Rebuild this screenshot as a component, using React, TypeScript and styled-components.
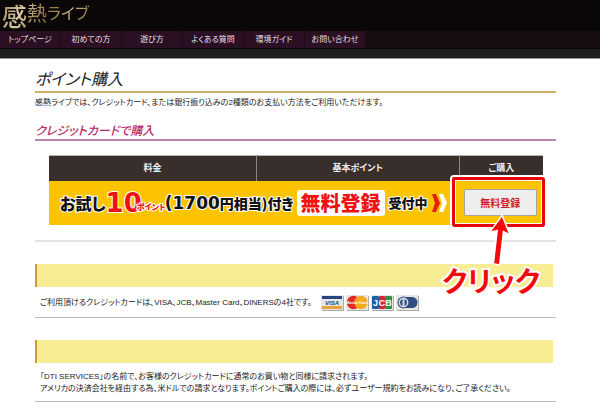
import React from "react";
import styled, { createGlobalStyle } from "styled-components";

const GlobalStyle = createGlobalStyle`
  * { box-sizing: border-box; }
  body {
    margin: 0;
    background: #fff;
    color: #222;
    font-family: "Liberation Sans", "Noto Sans CJK JP", sans-serif;
    font-size: 8px;
    line-height: 12px;
    font-feature-settings: "palt";
  }
`;

const Header = styled.header`
  background: #0b0708;
`;

const Logo = styled.a`
  display: flex;
  align-items: flex-start;
  width: max-content;
  height: 31px;
  padding-left: 2px;
  color: transparent;
  background: linear-gradient(115deg, #8b7a50, #d6c9a0 25%, #8d733c 50%, #c5b385 75%, #806a3c);
  background-clip: text;
  -webkit-background-clip: text;
  text-decoration: none;
  font-family: "Noto Sans CJK JP", sans-serif;
`;

const LogoPart = styled.span<{ $size: number; $top: number; $weight?: number }>`
  font-size: ${(p) => p.$size}px;
  line-height: ${(p) => p.$size}px;
  margin-top: ${(p) => p.$top}px;
  font-weight: ${(p) => p.$weight ?? 400};
  & + &:last-child { margin-left: 2px; }
`;

const Nav = styled.nav`
  display: flex;
  height: 18px;
  background: #160d11;
  border-bottom: 1px solid #090607;
`;

const NavLink = styled.a`
  width: 61px;
  line-height: 17px;
  text-align: center;
  white-space: nowrap;
  color: #e6dfe3;
  background: #2b0f23;
  border-right: 1px solid #1a0a16;
  text-decoration: none;
`;

const Strip = styled.div`
  height: 10px;
  background: #1f1f1f;
  border-bottom: 1px solid #999;
`;

const Main = styled.main`
  padding: 10px 44px 0 35px;
`;

const Title = styled.h1`
  margin: 0;
  height: 24px;
  font-size: 16px;
  line-height: 22px;
  font-weight: 400;
  font-style: italic;
  border-bottom: 2px solid #cdb164;
`;

const Intro = styled.p`
  margin: 4px 0 15px;
`;

const Subtitle = styled.h2`
  margin: 0;
  height: 17px;
  font-size: 12px;
  line-height: 15px;
  font-weight: 500;
  font-style: italic;
  color: #b52a6b;
  border-bottom: 2px solid #bd86ac;
`;

const PlanArea = styled.div`
  padding: 14px 13px 15px 14px;
  border-bottom: 2px solid #e4e4e4;
`;

const PlanTable = styled.table`
  width: 100%;
  table-layout: fixed;
  border-collapse: collapse;
  border-top: 1px solid #bbb3ae;
`;

const Col = styled.col<{ $share: number }>`
  width: ${(p) => p.$share}%;
`;

const HeadCell = styled.th`
  height: 25px;
  padding: 0;
  font-size: 9px;
  font-weight: 700;
  color: #f1ecea;
  background: #382e2b;
  & + & { border-left: 1px solid #91847f; }
`;

const OfferCell = styled.td`
  height: 44px;
  padding: 0;
  background: #fcc400;
`;

const BuyCell = styled(OfferCell)`
  position: relative;
  border-left: 1px solid #e0c56a;
`;

const Offer = styled.div`
  display: flex;
  align-items: center;
  padding-left: 11px;
  height: 44px;
  white-space: nowrap;
  font-family: "DejaVu Sans", "Noto Sans CJK JP", sans-serif;
  font-weight: 700;
  color: #111;
`;

const OfferText = styled.span<{ $size: number; $tone?: string }>`
  font-family: "Noto Sans CJK JP", sans-serif;
  font-weight: 900;
  font-size: ${(p) => p.$size}px;
  line-height: 26px;
  color: ${(p) => p.$tone ?? "#111"};
  -webkit-text-stroke: 2px #fff;
  paint-order: stroke fill;
`;

const Digits = styled.span<{ $size: number; $tone?: string }>`
  font-size: ${(p) => p.$size}px;
  line-height: 26px;
  color: ${(p) => p.$tone ?? "#111"};
  -webkit-text-stroke: 2px #fff;
  paint-order: stroke fill;
`;

const Unit = styled(OfferText)`
  align-self: flex-end;
  margin: 0 -1px 0 -5px;
  padding-bottom: 6px;
  line-height: 24px;
`;

const FreeBadge = styled.span`
  margin: 0 4px 0 3px;
  padding: 0 4px;
  border-radius: 3px;
  background: #fff;
  color: #ee1111;
  font-family: "Noto Sans CJK JP", sans-serif;
  font-weight: 900;
  font-size: 20px;
  line-height: 26px;
`;

const Chevrons = styled.svg`
  width: 17px;
  height: 20px;
  margin-left: 3px;
`;

const BuyButton = styled.button`
  display: block;
  width: calc(100% - 10px);
  height: 27px;
  margin: 0 6px 0 4px;
  padding: 0;
  border: 1px solid #aaa49a;
  border-radius: 2px;
  background: #eee;
  color: #d01c28;
  font: 700 10px/24px "Noto Sans CJK JP", sans-serif;
`;

const Marker = styled.div`
  position: absolute;
  inset: -4px -2px -2px -8px;
  border: 3px solid #e8060d;
  border-radius: 2px;
  outline: 2px solid #fff;
  box-shadow: inset 0 0 0 1px #fff;
  pointer-events: none;
`;

const Callout = styled.div`
  position: absolute;
  top: 34px;
  right: 2px;
  width: 100px;
  display: flex;
  flex-direction: column;
  align-items: center;
  pointer-events: none;
`;

const Arrow = styled.svg`
  width: 24px;
  height: 52px;
  margin-left: 16px;
`;

const CalloutText = styled.span`
  font-family: "Noto Sans CJK JP", sans-serif;
  font-size: 28px;
  line-height: 26px;
  font-weight: 700;
  white-space: nowrap;
  color: #f00a0a;
  -webkit-text-stroke: 4px #fff;
  paint-order: stroke fill;
`;

const Section = styled.section`
  padding-bottom: 6px;
  border-bottom: 1px solid #bbb;
`;

const Bar = styled.div`
  height: 23px;
  margin: 22px 3px 0 0;
  border-left: 2px solid #c9a02c;
  background: #f8ec95;
`;

const Row = styled.div`
  display: flex;
  align-items: center;
  gap: 9px;
  padding: 8px 0 0 5px;
`;

const Note = styled.p`
  margin: 0;
  padding: 8px 0 0 5px;
`;

const Cards = styled.div`
  display: flex;
  gap: 2px;
`;

const CardIcon = styled.svg`
  width: 23px;
  height: 16px;
`;

const nav = ["トップページ", "初めての方", "遊び方", "よくある質問", "環境ガイド", "お問い合わせ"];

const CardBase = () => (
  <>
    <rect x="1" y="1" width="22" height="15" fill="#aaa" />
    <rect width="22" height="15" fill="#e8e6e0" />
  </>
);

const Visa = () => (
  <CardIcon viewBox="0 0 23 16" role="img" aria-label="VISA">
    <CardBase />
    <rect x="1" y="1" width="20" height="3" fill="#27477c" />
    <rect x="1" y="11" width="20" height="3" fill="#e3a33e" />
    <text x="11" y="10" textAnchor="middle" fontSize="6" fontWeight="700" fontStyle="italic" fill="#27477c">VISA</text>
  </CardIcon>
);

const Master = () => (
  <CardIcon viewBox="0 0 23 16" role="img" aria-label="MasterCard">
    <CardBase />
    <circle cx="7.5" cy="7.5" r="6.7" fill="#e52b23" />
    <circle cx="15" cy="7.5" r="6.7" fill="#f5a91d" />
    <text x="11" y="9" textAnchor="middle" fontSize="4" fontWeight="700" fill="#fff">MasterCard</text>
  </CardIcon>
);

const Jcb = () => (
  <CardIcon viewBox="0 0 23 16" role="img" aria-label="JCB">
    <CardBase />
    <rect x="1" y="1" width="7" height="13" rx="1" fill="#245da6" />
    <rect x="8" y="1" width="6" height="13" rx="1" fill="#d82534" />
    <rect x="14" y="1" width="7" height="13" rx="1" fill="#269440" />
    <g fontSize="9" fontWeight="700" fill="#fff" textAnchor="middle">
      <text x="4.5" y="11">J</text>
      <text x="11" y="11">C</text>
      <text x="17.5" y="11">B</text>
    </g>
  </CardIcon>
);

const Diners = () => (
  <CardIcon viewBox="0 0 23 16" role="img" aria-label="DINERS">
    <CardBase />
    <path d="M8 2h8a5.5 5.5 0 0 1 0 11H8z" fill="#304b80" />
    <circle cx="7.5" cy="7.5" r="6" fill="#304b80" />
    <circle cx="7.5" cy="7.5" r="4.9" fill="#d9dde6" />
    <path d="M6.5 4a3.7 3.7 0 0 0 0 7zM8.5 4a3.7 3.7 0 0 1 0 7z" fill="#304b80" />
  </CardIcon>
);

export default function App() {
  return (
    <>
      <GlobalStyle />
      <Header>
        <Logo href="#">
          <LogoPart $size={25} $top={3} $weight={500}>感</LogoPart>
          <LogoPart $size={20} $top={3}>熱</LogoPart>
          <LogoPart $size={16} $top={4}>ライブ</LogoPart>
        </Logo>
        <Nav>
          {nav.map((label) => (
            <NavLink href="#" key={label}>{label}</NavLink>
          ))}
        </Nav>
        <Strip />
      </Header>
      <Main>
        <Title>ポイント購入</Title>
        <Intro>感熱ライブでは、クレジットカード、または銀行振り込みの2種類のお支払い方法をご利用いただけます。</Intro>
        <Subtitle>クレジットカードで購入</Subtitle>
        <PlanArea>
          <PlanTable>
            <colgroup>
              <Col $share={42} />
              <Col $share={41} />
              <Col $share={17} />
            </colgroup>
            <thead>
              <tr>
                <HeadCell scope="col">料金</HeadCell>
                <HeadCell scope="col">基本ポイント</HeadCell>
                <HeadCell scope="col">ご購入</HeadCell>
              </tr>
            </thead>
            <tbody>
              <tr>
                <OfferCell colSpan={2}>
                  <Offer>
                    <OfferText $size={16}>お試し</OfferText>
                    <Digits $size={26} $tone="#ee1111">10</Digits>
                    <Unit $size={8} $tone="#ee1111">ポイント</Unit>
                    <Digits $size={17}>(1700</Digits>
                    <OfferText $size={14}>円相当)付き</OfferText>
                    <FreeBadge>無料登録</FreeBadge>
                    <OfferText $size={13}>受付中</OfferText>
                    <Chevrons viewBox="0 0 17 20" aria-hidden="true">
                      <path d="M1 1h4l4 9-4 9H1l3-9z" fill="#e5200e" />
                      <path d="M8 1h4l4 9-4 9H8l3-9z" fill="#fff" />
                    </Chevrons>
                  </Offer>
                </OfferCell>
                <BuyCell>
                  <BuyButton type="button">無料登録</BuyButton>
                  <Marker />
                  <Callout>
                    <Arrow viewBox="0 0 24 54" aria-hidden="true">
                      <path d="M15 2L4 17l7-2-4 35 5 1 4-35 6 3z" fill="#f00a0a" stroke="#fff" strokeWidth="3" paintOrder="stroke" />
                    </Arrow>
                    <CalloutText>クリック</CalloutText>
                  </Callout>
                </BuyCell>
              </tr>
            </tbody>
          </PlanTable>
        </PlanArea>
        <Section>
          <Bar />
          <Row>
            <span>ご利用頂けるクレジットカードは、VISA、JCB、Master Card、DINERSの4社です。</span>
            <Cards>
              <Visa />
              <Master />
              <Jcb />
              <Diners />
            </Cards>
          </Row>
        </Section>
        <Section>
          <Bar />
          <Note>
            「DTI SERVICES」の名前で、お客様のクレジットカードに通常のお買い物と同様に請求されます。
            <br />
            アメリカの決済会社を経由する為、米ドルでの請求となります。ポイントご購入の際には、必ずユーザー規約をお読みになり、ご了承ください。
          </Note>
        </Section>
      </Main>
    </>
  );
}
